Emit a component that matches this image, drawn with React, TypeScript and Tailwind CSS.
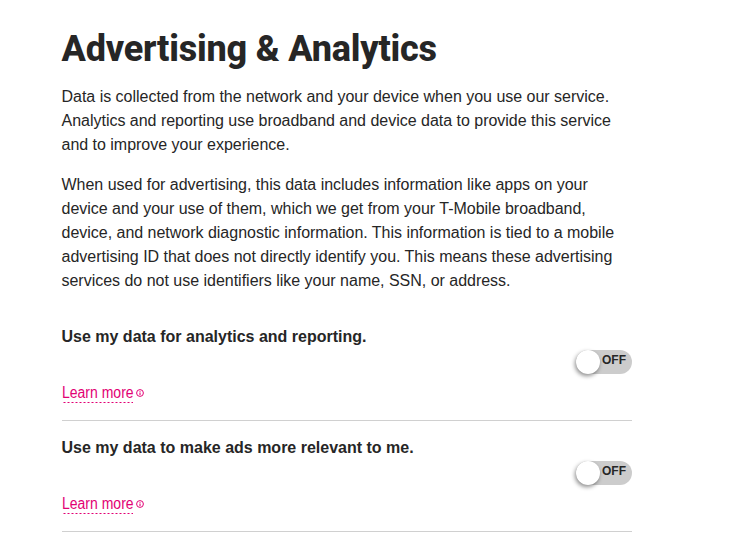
import React from "react";

function Row({ title }: { title: string }) {
  return (
    <div className="border-b border-[#d0d0d0] h-[111px] flex flex-col">
      <div className="pt-[15px] text-[16px] leading-[24px] font-bold text-[#262626]">{title}</div>
      <div className="flex justify-end mt-[1px]">
        <div className="relative w-[56px] h-[24px] rounded-full bg-[#cccccc]">
          <span className="absolute left-[26px] top-[3px] text-[12px] leading-[15px] font-bold text-[#262626]">OFF</span>
          <span className="absolute left-0 top-0 w-[24px] h-[24px] rounded-full bg-white shadow-[-1px_2px_4px_rgba(0,0,0,0.45)]" />
        </div>
      </div>
      <div className="mt-[6px] flex items-start">
        <span className="block w-[71px] h-[23px] bg-[linear-gradient(to_right,#e20074_2px,transparent_2px)] bg-[length:4px_1px] bg-bottom bg-repeat-x">
          <span className="block whitespace-nowrap text-[16px] leading-[26px] text-[#e20074] origin-left scale-x-[0.875]">Learn more</span>
        </span>
        <svg className="ml-[3px] mt-[9px]" width="8" height="8" viewBox="0 0 8 8" fill="none" stroke="#e20074">
          <circle cx="4" cy="4" r="3.4" strokeWidth="1" />
          <path d="M4 3.4V6" strokeWidth="1.1" />
          <path d="M4 2V2.8" strokeWidth="1" />
        </svg>
      </div>
    </div>
  );
}

export default function App() {
  return (
    <div className="w-[755px] h-[556px] overflow-hidden bg-white pl-[61.5px] pr-[123px] pt-[25px] font-['Liberation_Sans',sans-serif] text-[#262626]">
      <h1 className="text-[36px] leading-[48px] font-extrabold tracking-[-0.2px] font-['Roboto',sans-serif] text-[#262626]">Advertising &amp; Analytics</h1>
      <p className="mt-[12px] text-[16px] leading-[24px] tracking-[-0.015px]">
        Data is collected from the network and your device when you use our service.<br />
        Analytics and reporting use broadband and device data to provide this service<br />
        and to improve your experience.
      </p>
      <p className="mt-[16px] text-[16px] leading-[24px] tracking-[-0.015px]">
        When used for advertising, this data includes information like apps on your<br />
        device and your use of them, which we get from your T-Mobile broadband,<br />
        device, and network diagnostic information. This information is tied to a mobile<br />
        advertising ID that does not directly identify you. This means these advertising<br />
        services do not use identifiers like your name, SSN, or address.
      </p>
      <div className="mt-[17px]">
        <Row title="Use my data for analytics and reporting." />
        <Row title="Use my data to make ads more relevant to me." />
      </div>
    </div>
  );
}
